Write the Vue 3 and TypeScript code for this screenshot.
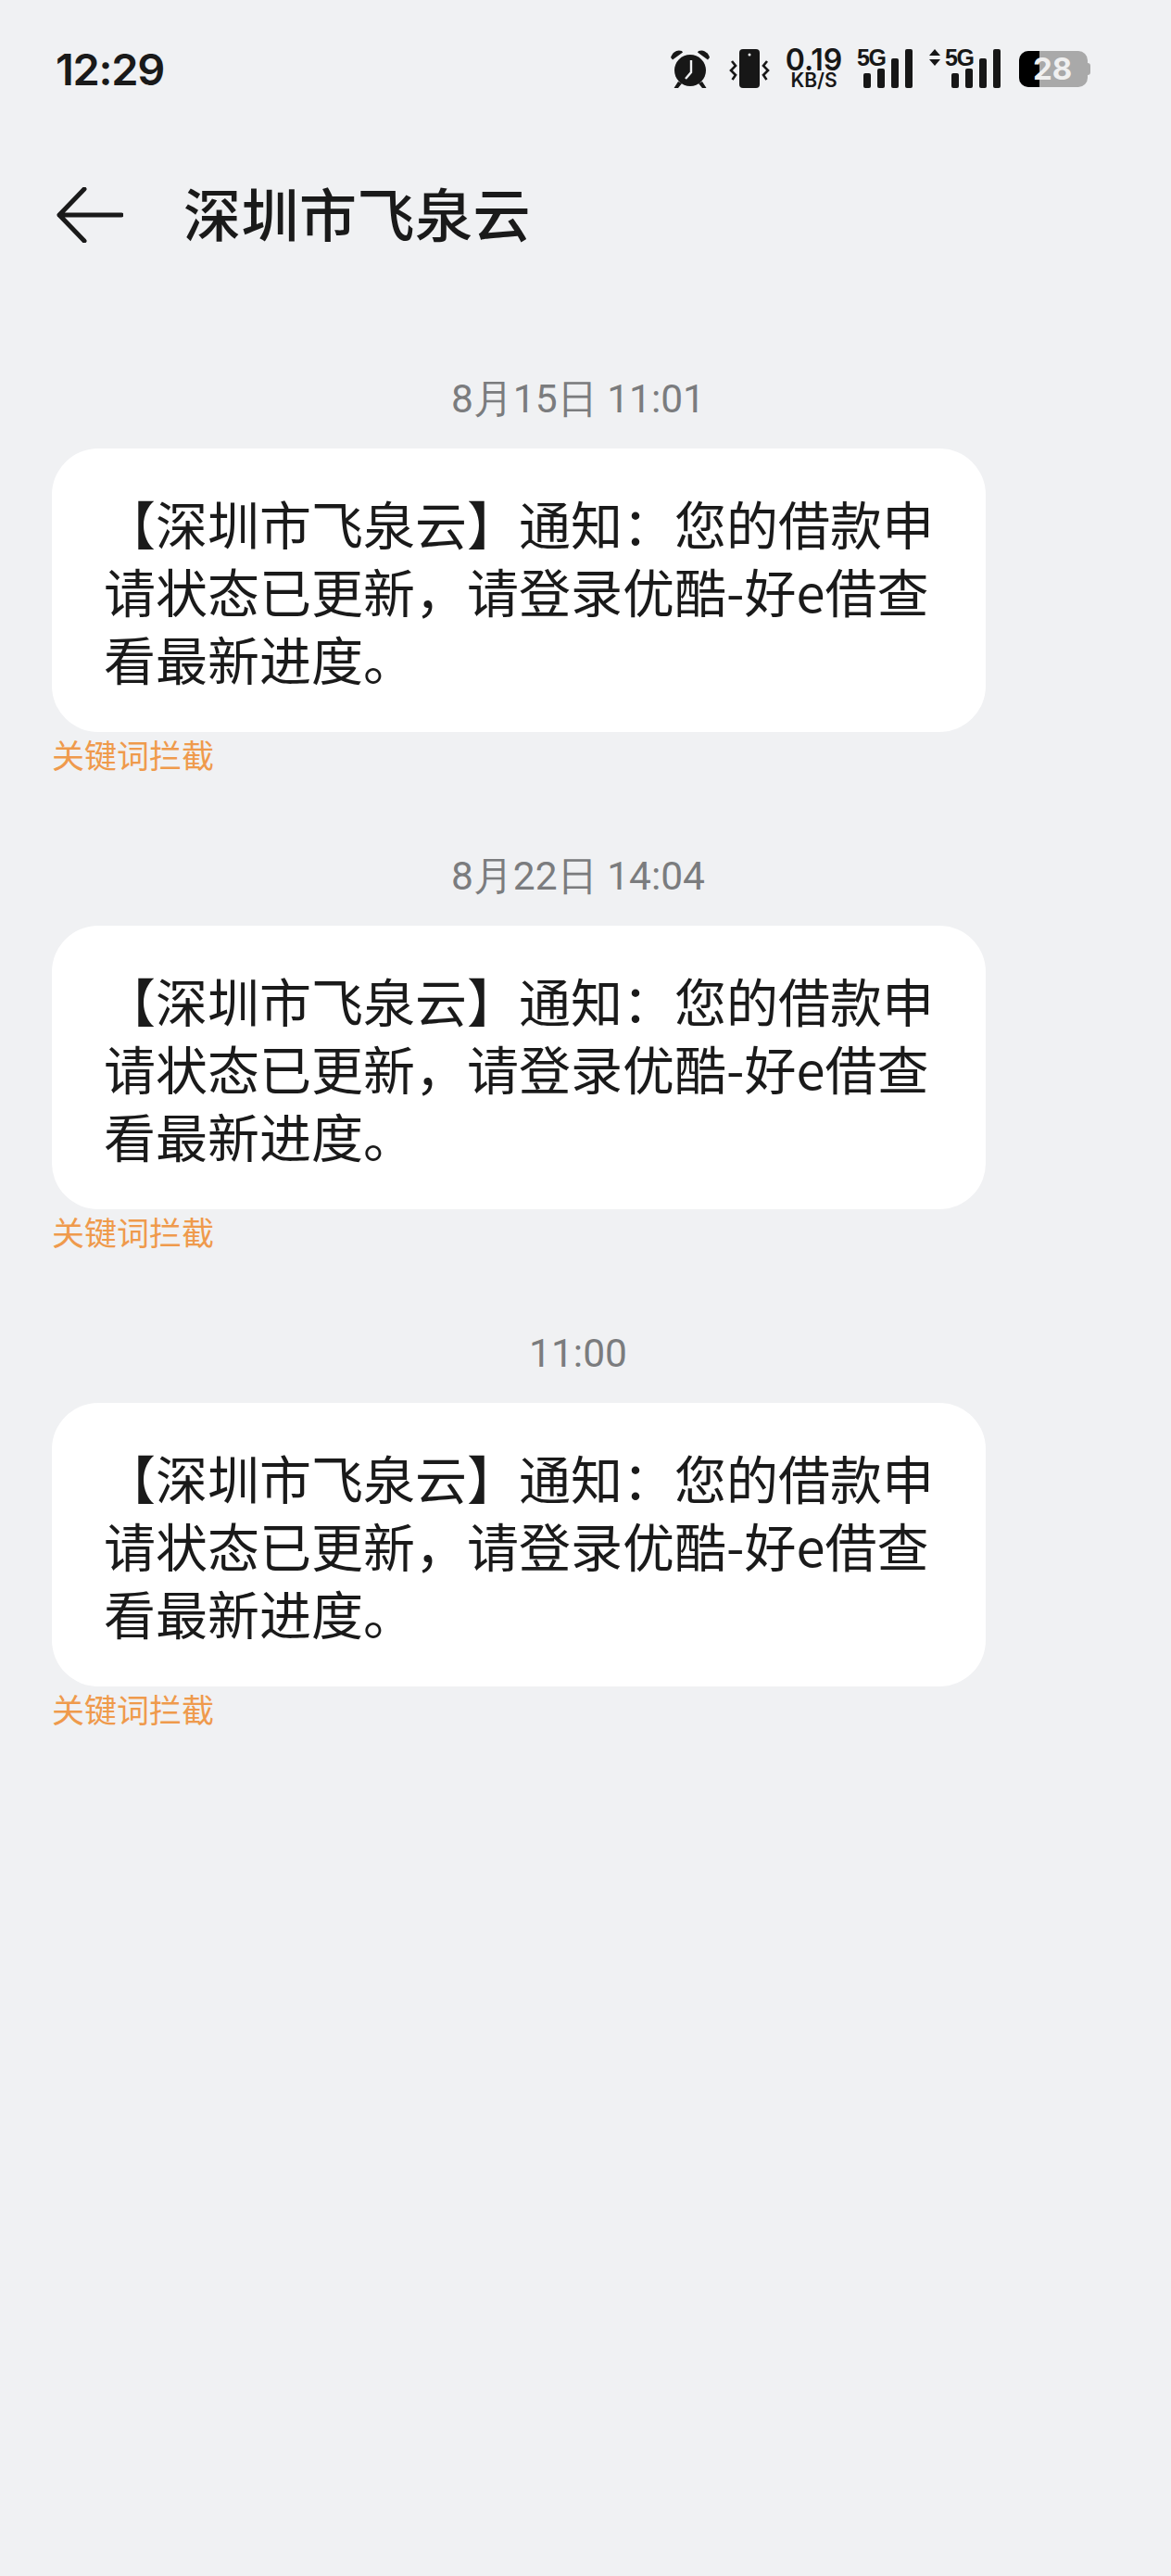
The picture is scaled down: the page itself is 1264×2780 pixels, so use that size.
<script setup lang="ts">
const messages = [
  { id: 1, time: '8月15日 11:01' },
  { id: 2, time: '8月22日 14:04' },
  { id: 3, time: '11:00' }
]
const body = '【深圳市飞泉云】通知：您的借款申请状态已更新，请登录优酷-好e借查看最新进度。'
const bars = [
  { x: 7, y: 27, h: 16 },
  { x: 22, y: 22, h: 21 },
  { x: 37, y: 11, h: 32 },
  { x: 52, y: 1, h: 42 }
]
</script>

<template>
  <div class="page">
    <div class="status">
      <span class="clock">12:29</span>
      <div class="icons">
        <svg class="alarm" width="44" height="44" viewBox="0 0 44 44">
          <circle cx="22" cy="24" r="17" fill="#171717" />
          <path d="M1 10C3 4 8 1 13 3L14 4.500 3 12.500Z" fill="#171717" />
          <path d="M43 10C41 4 36 1 31 3L30 4.500 41 12.500Z" fill="#171717" />
          <path d="M9 36L4.500 43H9L13 38ZM35 36L39.500 43H35L31 38Z" fill="#171717" />
          <path d="M23 13V26L17 33" fill="none" stroke="#f0f1f3" stroke-width="2.400" />
        </svg>
        <svg class="buzz" width="44" height="44" viewBox="0 0 44 44">
          <rect x="11" y="1" width="22" height="42" rx="4" fill="#171717" />
          <circle cx="22" cy="7" r="1.500" fill="#f0f1f3" />
          <path d="M3 14L7 19 2 24 7 29 3.500 34M41 14L37 19 42 24 37 29 40.500 34" fill="none" stroke="#171717" stroke-width="2.600" />
        </svg>
        <div class="speed">
          <span class="speed-num">0.19</span>
          <span class="speed-unit">KB/S</span>
        </div>
        <div class="signal">
          <span class="net">5G</span>
          <svg width="60" height="44" viewBox="0 0 60 44">
            <rect v-for="b in bars" :key="b.x" :x="b.x" :y="b.y" width="8" :height="b.h" rx="2" fill="#171717" />
          </svg>
        </div>
        <div class="signal signal-data">
          <svg class="updown" width="14" height="18" viewBox="0 0 14 18">
            <path d="M7 0L13 7H1ZM7 18L1 11H13Z" fill="#171717" />
          </svg>
          <span class="net">5G</span>
          <svg width="60" height="44" viewBox="0 0 60 44">
            <rect v-for="b in bars" :key="b.x" :x="b.x" :y="b.y" width="8" :height="b.h" rx="2" fill="#171717" />
          </svg>
        </div>
        <div class="battery">
          <div class="battery-level"></div>
          <span class="battery-num">28</span>
          <div class="battery-nub"></div>
        </div>
      </div>
    </div>

    <div class="titlebar">
      <svg width="72" height="60" viewBox="0 0 72 60">
        <path d="M70 30H3M30 2L3 30 30 58" fill="none" stroke="#1a1a1a" stroke-width="5" stroke-linecap="round" stroke-linejoin="round" />
      </svg>
      <h1>深圳市飞泉云</h1>
    </div>

    <div class="thread">
      <div v-for="m in messages" :key="m.id" class="message">
        <div class="time">{{ m.time }}</div>
        <div class="bubble">{{ body }}</div>
        <div class="blocked">关键词拦截</div>
      </div>
    </div>
  </div>
</template>

<style scoped>
.page {
  min-height: 2780px;
  background-color: #f0f1f3;
  color: #1a1a1a;
  font-family: "Noto Sans CJK SC", "Noto Sans", sans-serif;
  overflow: hidden;
}

.status {
  display: flex;
  align-items: center;
  justify-content: space-between;
  height: 44px;
  padding: 52px 87px 0 60px;
}

.clock {
  font-family: Inter, sans-serif;
  font-size: 47px;
  font-weight: 600;
  letter-spacing: -1.300px;
}

.icons {
  display: flex;
  align-items: center;
}

.alarm {
  margin-right: 20px;
}

.buzz {
  margin-right: 17px;
}

.speed {
  display: flex;
  flex-direction: column;
  align-items: center;
  width: 61px;
  margin-right: 16px;
  font-family: Inter, sans-serif;
  font-weight: 600;
  color: #171717;
}

.speed-num {
  font-size: 32px;
  line-height: 26px;
}

.speed-unit {
  font-size: 21px;
  line-height: 18px;
}

.signal {
  position: relative;
  width: 60px;
  height: 44px;
  margin-right: 17px;
}

.signal svg {
  display: block;
}

.net {
  position: absolute;
  top: -4px;
  left: 0;
  font-family: "Liberation Sans", sans-serif;
  font-size: 25px;
  font-weight: 700;
  line-height: 28px;
  letter-spacing: -1.500px;
  color: #171717;
}

.signal-data {
  width: 78px;
  margin-right: 20px;
}

.signal-data .net {
  left: 18px;
}

.signal-data svg {
  margin-left: 18px;
}

.signal-data .updown {
  position: absolute;
  top: 1px;
  left: 0;
  margin: 0;
}

.battery {
  position: relative;
  width: 74px;
  height: 39px;
  margin-right: 3px;
  border-radius: 10px;
  background-color: #a9a9a9;
}

.battery-level {
  width: 22px;
  height: 100%;
  border-radius: 10px 0 0 10px;
  background-color: #000000;
}

.battery-num {
  position: absolute;
  top: 0;
  left: 15px;
  font-family: Inter, sans-serif;
  font-size: 33px;
  font-weight: 700;
  line-height: 39px;
  color: #f0f0f0;
}

.battery-nub {
  position: absolute;
  top: 13px;
  right: -3px;
  width: 3px;
  height: 13px;
  border-radius: 0 3px 3px 0;
  background-color: #a9a9a9;
}

.titlebar {
  display: flex;
  align-items: center;
  gap: 65px;
  margin-top: 106px;
  padding-left: 61px;
  height: 60px;
}

h1 {
  margin: -6px 0 0;
  font-size: 62px;
  font-weight: 500;
  line-height: 60px;
  letter-spacing: 0.500px;
}

.thread {
  display: flex;
  flex-direction: column;
  gap: 86px;
  margin-top: 145px;
  padding: 0 56px;
}

.time {
  width: 1136px;
  font-family: Roboto, sans-serif;
  font-size: 42.500px;
  line-height: 48px;
  text-align: center;
  color: #7b7c7e;
}

.bubble {
  width: 1008px;
  height: 306px;
  box-sizing: border-box;
  margin-top: 29px;
  padding: 43px 54px 0 56px;
  border-radius: 50px;
  background-color: #ffffff;
  font-size: 56px;
  line-height: 73px;
}

.blocked {
  margin-top: 2px;
  font-size: 35px;
  line-height: 44px;
  color: #ef9a4c;
}
</style>
